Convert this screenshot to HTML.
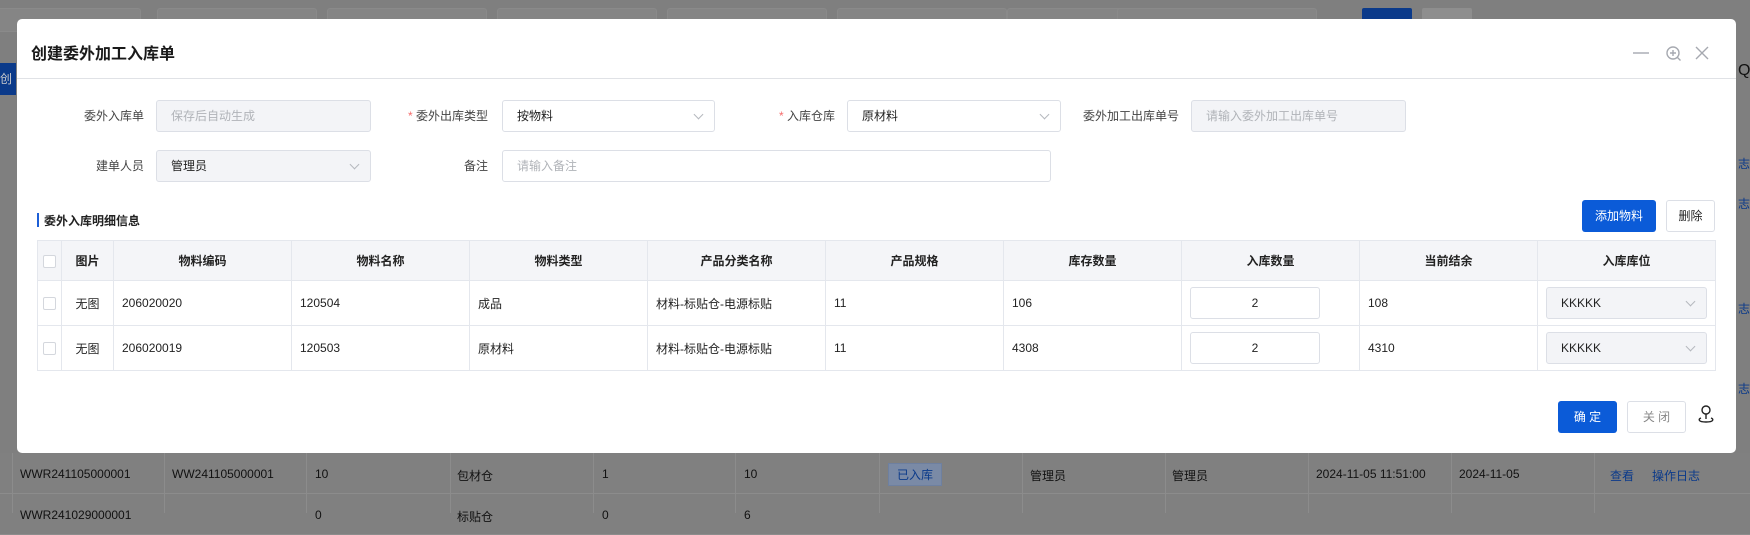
<!DOCTYPE html>
<html><head><meta charset="utf-8"><style>
*{box-sizing:border-box;margin:0;padding:0}
body{width:1750px;height:513px;overflow:hidden;background:#7f7f7f;font-family:"Liberation Sans","Noto Sans CJK SC",sans-serif;font-size:12px;color:#222;position:relative}
.a{position:absolute;white-space:nowrap}
.bgbox{position:absolute;border:1px solid #8a8a8a;border-radius:3px;height:24px;top:8px;background:#858585}
.bgrow{position:absolute;left:0;width:1750px;height:41px;border-bottom:1px solid #8c8c8c;background:#808080;color:#111;font-size:12px}
.bgrow span{position:absolute;top:14px;white-space:nowrap}
.vl{position:absolute;top:453px;height:60px;width:1px;background:#8c8c8c}
.modal{position:absolute;left:17px;top:19px;width:1719px;height:434px;background:#fff;border-radius:5px}
.lbl{position:absolute;font-size:12px;color:#444;text-align:right;line-height:32px;white-space:nowrap}
.inp{position:absolute;height:32px;border:1px solid #dcdfe6;border-radius:3px;line-height:30px;padding-left:14px;font-size:12px;white-space:nowrap}
.dis{background:#f3f4f7;color:#b0b3b8}
.ch{position:absolute;right:12px;top:10px;width:7px;height:7px;border-right:1px solid #b5b8be;border-bottom:1px solid #b5b8be;transform:rotate(45deg)}
.star{color:#f56c6c}
table{position:absolute;left:37px;top:240px;border-collapse:collapse;table-layout:fixed;width:1678px}
td,th{border:1px solid #e4e7ed;font-size:12px;height:40px;padding-left:8px;white-space:nowrap}
th{background:#f4f5f8;height:40px;font-weight:bold;color:#222;text-align:center;padding:0}
tbody td{height:45px}
.cb{display:inline-block;width:13px;height:13px;border:1px solid #d4d7dd;border-radius:2px;background:#fff;vertical-align:middle}
.btn{position:absolute;border-radius:3px;text-align:center;font-size:12px}
</style></head><body>
<div class="bgbox" style="left:-5px;width:146px"></div>
<div class="bgbox" style="left:157px;width:160px"></div>
<div class="bgbox" style="left:327px;width:160px"></div>
<div class="bgbox" style="left:497px;width:160px"></div>
<div class="bgbox" style="left:667px;width:160px"></div>
<div class="bgbox" style="left:837px;width:170px"></div>
<div class="bgbox" style="left:1007px;width:180px"></div>
<div class="bgbox" style="left:1117px;width:200px"></div>
<div class="a" style="left:1362px;top:8px;width:50px;height:16px;background:#0b3a8a;border-radius:2px"></div>
<div class="a" style="left:1422px;top:8px;width:50px;height:16px;background:#8e8e8e;border-radius:2px"></div>
<div class="a" style="left:0;top:63px;width:16px;height:32px;background:#0b3a8a;color:#ccc;line-height:32px;font-size:12px">创</div>
<div class="a" style="left:1738px;top:62px;font-size:16px;color:#111">Q</div>
<div class="a" style="left:1738px;top:155px;color:#0b3a8a">志</div>
<div class="a" style="left:1738px;top:195px;color:#0b3a8a">志</div>
<div class="a" style="left:1738px;top:300px;color:#0b3a8a">志</div>
<div class="a" style="left:1738px;top:380px;color:#0b3a8a">志</div>
<div class="bgrow" style="top:453px"><span style="left:20px">WWR241105000001</span><span style="left:172px">WW241105000001</span><span style="left:315px">10</span><span style="left:457px">包材仓</span><span style="left:602px">1</span><span style="left:744px">10</span><span style="left:888px;top:10px;background:#7a8aa6;border:1px solid #6e80a0;padding:2px 8px;color:#0b3a8a">已入库</span><span style="left:1030px">管理员</span><span style="left:1172px">管理员</span><span style="left:1316px">2024-11-05 11:51:00</span><span style="left:1459px">2024-11-05</span><span style="left:1610px;color:#0b3a8a">查看</span><span style="left:1652px;color:#0b3a8a">操作日志</span></div>
<div class="bgrow" style="top:494px"><span style="left:20px">WWR241029000001</span><span style="left:315px">0</span><span style="left:457px">标贴仓</span><span style="left:602px">0</span><span style="left:744px">6</span></div>
<div class="vl" style="left:12px"></div><div class="vl" style="left:164px"></div><div class="vl" style="left:306px"></div><div class="vl" style="left:450px"></div><div class="vl" style="left:593px"></div><div class="vl" style="left:735px"></div><div class="vl" style="left:879px"></div><div class="vl" style="left:1022px"></div><div class="vl" style="left:1165px"></div><div class="vl" style="left:1308px"></div><div class="vl" style="left:1451px"></div><div class="vl" style="left:1594px"></div>

<div class="modal"></div>
<div class="a" style="left:31px;top:40px;font-size:16px;font-weight:bold;color:#1a1a1a">创建委外加工入库单</div>
<svg class="a" style="left:1630px;top:43px" width="82" height="22" viewBox="0 0 82 22" fill="none" stroke="#a6a9b0" stroke-width="1.4"><path d="M3 10h16"/><circle cx="43" cy="10" r="6"/><path d="M43 7v6M40 10h6M47.5 14.5l3 3"/><path d="M66 4l12 12M78 4l-12 12"/></svg>
<div class="a" style="left:17px;top:78px;width:1719px;height:1px;background:#e0e2e6"></div>

<div class="lbl" style="left:50px;width:94px;top:100px">委外入库单</div>
<div class="inp dis" style="left:156px;top:100px;width:215px">保存后自动生成</div>
<div class="lbl" style="left:390px;width:98px;top:100px"><span class="star">* </span>委外出库类型</div>
<div class="inp" style="left:502px;top:100px;width:213px">按物料<i class="ch"></i></div>
<div class="lbl" style="left:740px;width:95px;top:100px"><span class="star">* </span>入库仓库</div>
<div class="inp" style="left:847px;top:100px;width:214px">原材料<i class="ch"></i></div>
<div class="lbl" style="left:1080px;width:99px;top:100px">委外加工出库单号</div>
<div class="inp dis" style="left:1191px;top:100px;width:215px">请输入委外加工出库单号</div>
<div class="lbl" style="left:50px;width:94px;top:150px">建单人员</div>
<div class="inp" style="left:156px;top:150px;width:215px;background:#f3f4f7">管理员<i class="ch"></i></div>
<div class="lbl" style="left:400px;width:88px;top:150px">备注</div>
<div class="inp" style="left:502px;top:150px;width:549px;color:#b0b3b8">请输入备注</div>

<div class="a" style="left:37px;top:213px;width:2px;height:14px;background:#1d5fd6"></div>
<div class="a" style="left:44px;top:212px;font-weight:bold;font-size:12px">委外入库明细信息</div>
<div class="btn" style="left:1582px;top:200px;width:74px;height:32px;line-height:32px;background:#0b5bd8;color:#fff">添加物料</div>
<div class="btn" style="left:1666px;top:200px;width:49px;height:32px;line-height:30px;border:1px solid #dcdfe6;color:#222">删除</div>

<table>
<colgroup><col style="width:24px"><col style="width:52px"><col style="width:178px"><col style="width:178px"><col style="width:178px"><col style="width:178px"><col style="width:178px"><col style="width:178px"><col style="width:178px"><col style="width:178px"><col style="width:178px"></colgroup>
<thead><tr><th><span class="cb"></span></th><th>图片</th><th>物料编码</th><th>物料名称</th><th>物料类型</th><th>产品分类名称</th><th>产品规格</th><th>库存数量</th><th>入库数量</th><th>当前结余</th><th>入库库位</th></tr></thead>
<tbody>
<tr><td style="padding:0;text-align:center"><span class="cb"></span></td><td style="padding:0;text-align:center">无图</td><td>206020020</td><td>120504</td><td>成品</td><td>材料-标贴仓-电源标贴</td><td>11</td><td>106</td><td></td><td>108</td><td></td></tr>
<tr><td style="padding:0;text-align:center"><span class="cb"></span></td><td style="padding:0;text-align:center">无图</td><td>206020019</td><td>120503</td><td>原材料</td><td>材料-标贴仓-电源标贴</td><td>11</td><td>4308</td><td></td><td>4310</td><td></td></tr>
</tbody></table>
<div class="inp" style="left:1190px;top:287px;width:130px;text-align:center;padding:0">2</div>
<div class="inp" style="left:1190px;top:332px;width:130px;text-align:center;padding:0">2</div>
<div class="inp" style="left:1546px;top:287px;width:161px;background:#f3f4f7">KKKKK<i class="ch"></i></div>
<div class="inp" style="left:1546px;top:332px;width:161px;background:#f3f4f7">KKKKK<i class="ch"></i></div>

<div class="btn" style="left:1558px;top:401px;width:59px;height:32px;line-height:32px;background:#0b5bd8;color:#fff">确 定</div>
<div class="btn" style="left:1627px;top:401px;width:59px;height:32px;line-height:30px;border:1px solid #dcdfe6;color:#888">关 闭</div>
<svg class="a" style="left:1697px;top:404px" width="18" height="22" viewBox="0 0 18 22" fill="none" stroke="#222" stroke-width="1.4"><circle cx="9" cy="6" r="4"/><path d="M9 10v5"/><path d="M4 14c-3 1-3 4 5 4s8-3 5-4"/></svg>
</body></html>
